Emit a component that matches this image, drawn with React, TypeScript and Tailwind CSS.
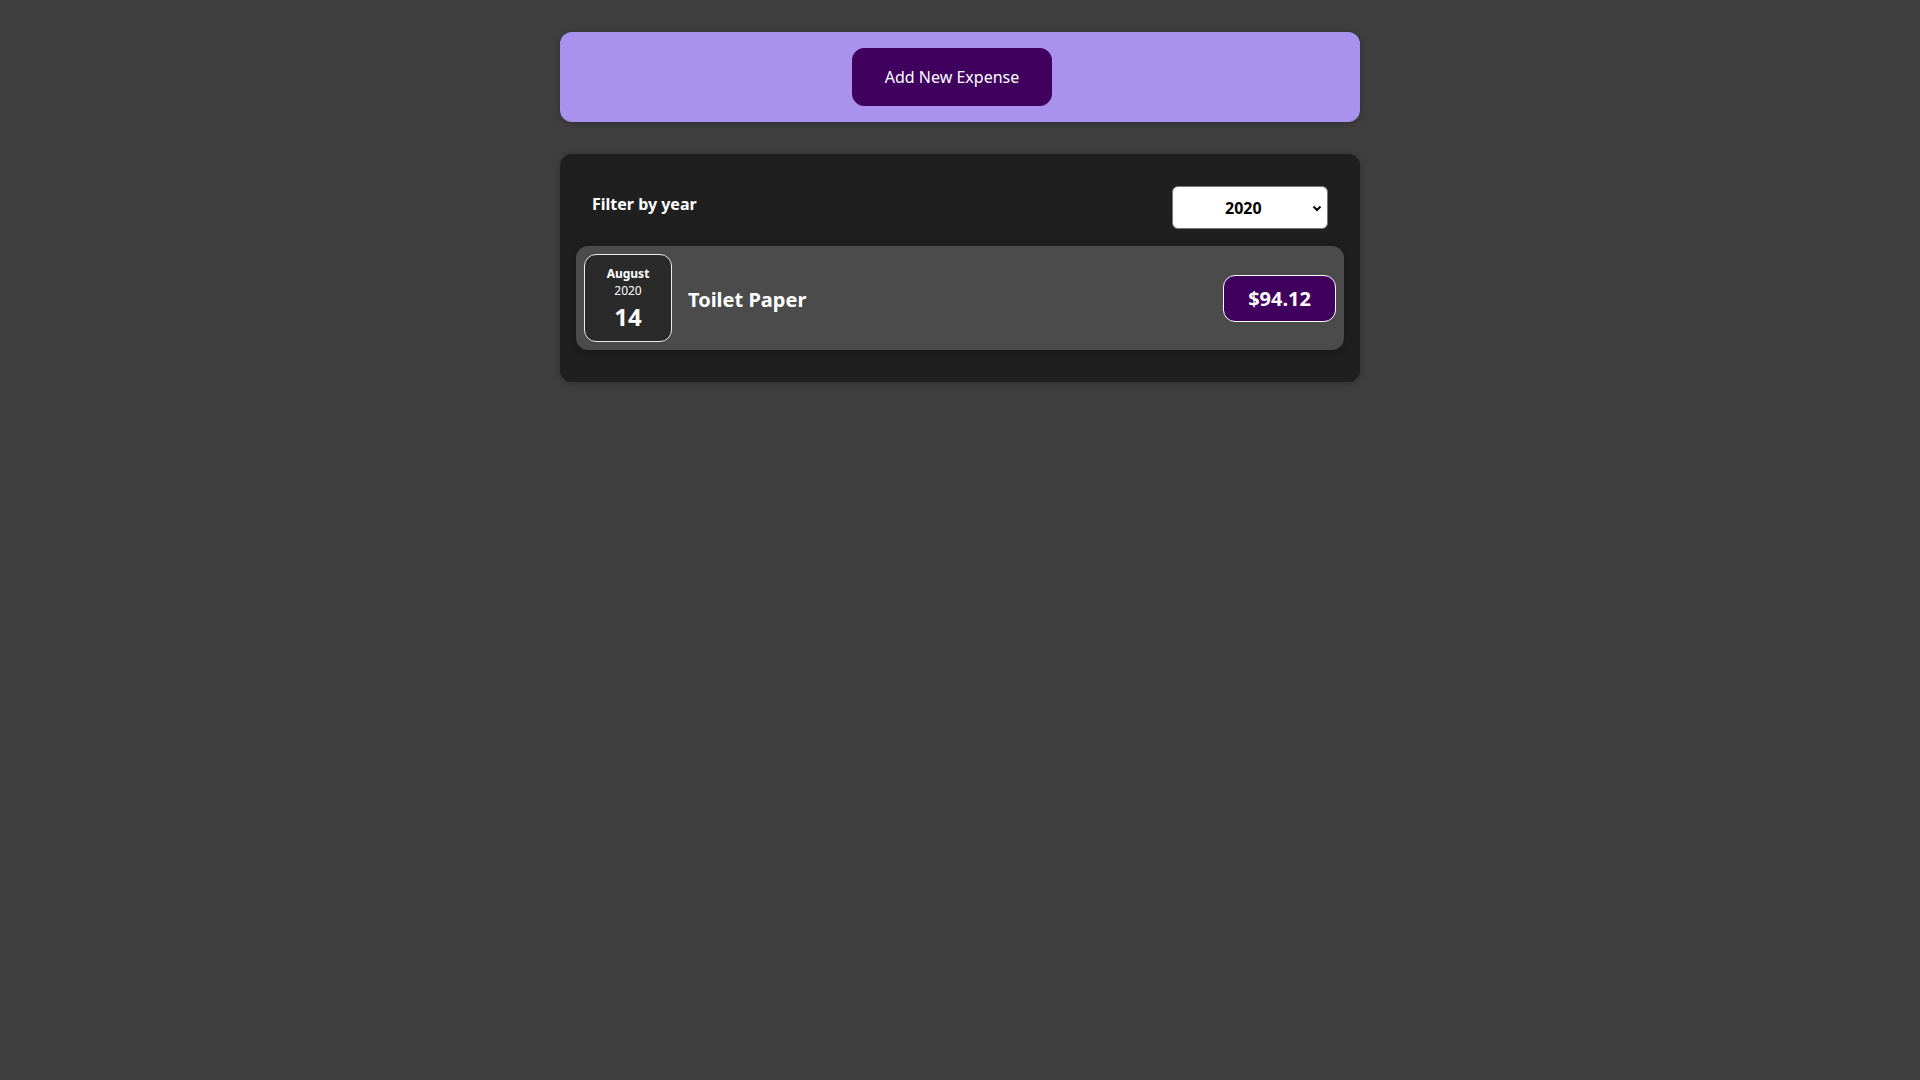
import { useState } from "react";

const expenses = [
  { id: "e1", title: "Toilet Paper", amount: 94.12, date: new Date(2020, 7, 14) },
];

const ExpenseDate: React.FC<{ date: Date }> = ({ date }) => {
  const month = date.toLocaleString("en-US", { month: "long" });
  const year = date.getFullYear();
  const day = date.toLocaleString("en-US", { day: "2-digit" });
  return (
    <div className="flex flex-col items-center justify-center w-[88px] h-[88px] shrink-0 border border-[#ececec] bg-[#2a2a2a] text-white rounded-xl">
      <div className="text-xs font-bold leading-[17px] mt-[2px]">{month}</div>
      <div className="text-xs leading-[17px]">{year}</div>
      <div className="text-2xl font-bold leading-[35px]">{day}</div>
    </div>
  );
};

export default function App() {
  const [year, setYear] = useState("2020");
  const filtered = expenses.filter((e) => e.date.getFullYear().toString() === year);

  return (
    <div className="min-h-screen bg-[#3f3f3f] pt-8 font-['Noto_Sans','Liberation_Sans',sans-serif]">
      {/* New expense */}
      <div className="w-[800px] mx-auto bg-[#a892ee] p-4 rounded-xl text-center shadow-[0_1px_8px_rgba(0,0,0,0.25)]">
        <button className="h-[58px] px-8 mr-4 bg-[#40005d] border border-[#40005d] text-white rounded-xl text-base">
          Add New Expense
        </button>
      </div>

      {/* Expenses */}
      <div className="w-[800px] mx-auto mt-8 p-4 bg-[#1f1f1f] rounded-xl shadow-[0_1px_8px_rgba(0,0,0,0.25)]">
        <div className="px-4 text-white">
          <div className="flex items-center justify-between mt-4 mb-[17px]">
            <label className="font-bold mb-2 text-base">Filter by year</label>
            <div className="relative">
              <select
                value={year}
                onChange={(e) => setYear(e.target.value)}
                className="appearance-none h-[43px] w-[156px] pl-[52px] pr-12 bg-white text-black font-bold text-base rounded-md border border-[#767676]"
              >
                <option value="2022">2022</option>
                <option value="2021">2021</option>
                <option value="2020">2020</option>
                <option value="2019">2019</option>
              </select>
              <svg
                className="absolute right-[6px] top-1/2 -translate-y-1/2 w-[10px] h-[10px] pointer-events-none"
                viewBox="0 0 10 10"
                fill="none"
                stroke="black"
                strokeWidth={2}
              >
                <path d="M1.5 3.5L5 7l3.5-3.5" />
              </svg>
            </div>
          </div>
        </div>

        {filtered.map((e) => (
          <div
            key={e.id}
            className="flex items-center justify-between p-2 mb-4 rounded-xl bg-[#4b4b4b] shadow-[0_2px_8px_rgba(0,0,0,0.25)]"
          >
            <div className="flex flex-1 items-center">
              <ExpenseDate date={e.date} />
              <h2 className="flex-1 mx-4 mt-1 text-xl font-bold text-white">{e.title}</h2>
              <div className="text-xl font-bold text-white bg-[#40005d] border border-white rounded-xl px-6 py-2 leading-[29px]">
                ${e.amount}
              </div>
            </div>
          </div>
        ))}
      </div>
    </div>
  );
}
